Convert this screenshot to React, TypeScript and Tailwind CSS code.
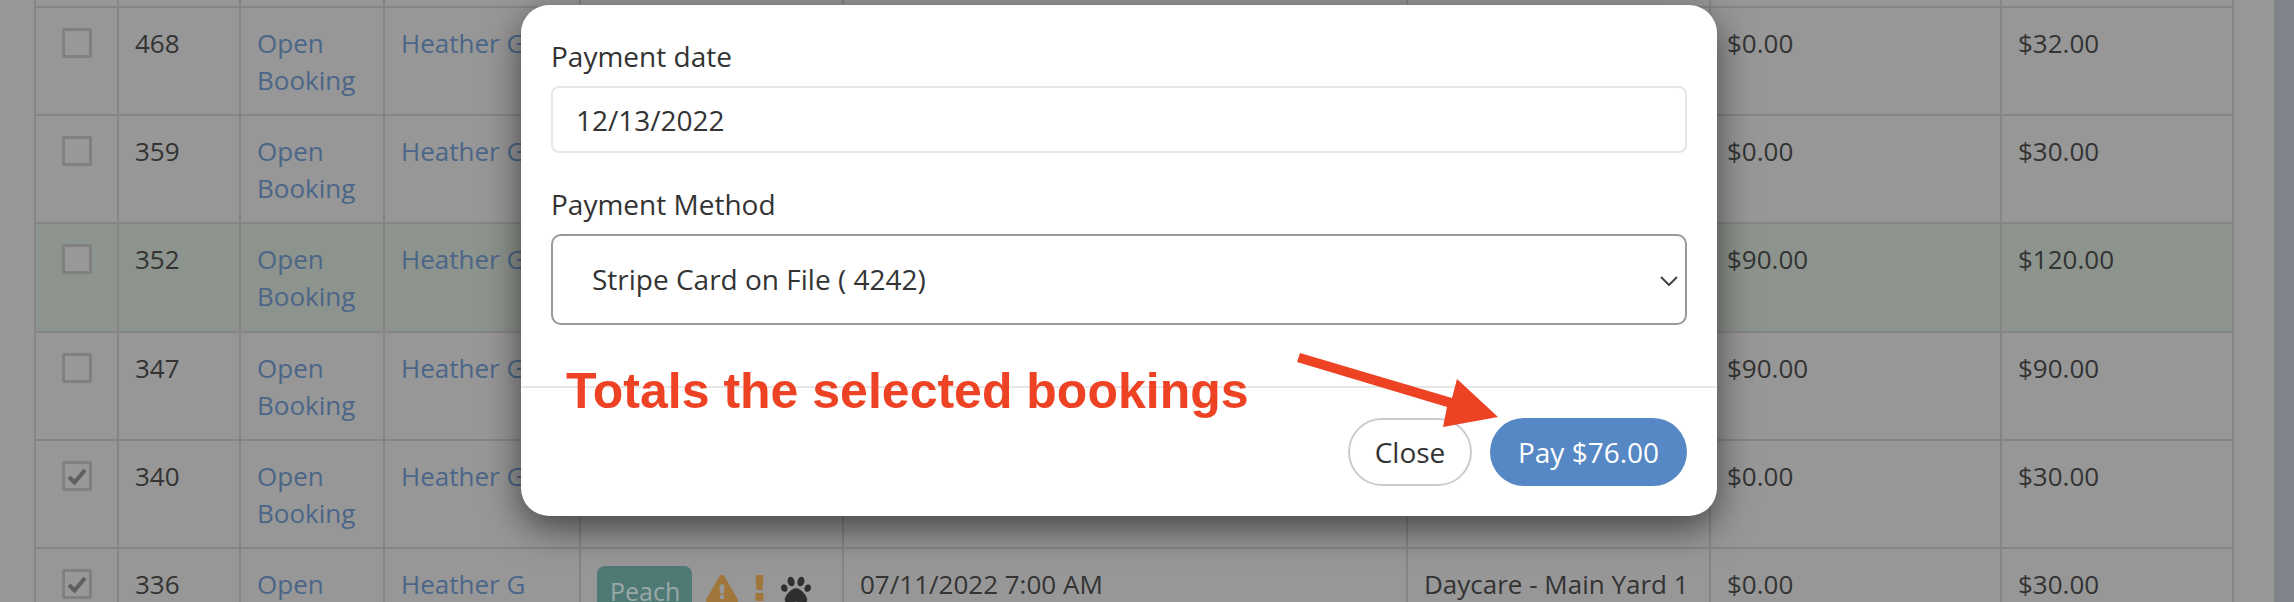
import React from "react";
import { FaExclamationTriangle, FaPaw } from "react-icons/fa";

const rows = [
  { id: "468", paid: "$0.00", total: "$32.00", checked: false, green: false, h: "h-[108px]" },
  { id: "359", paid: "$0.00", total: "$30.00", checked: false, green: false, h: "h-[108px]" },
  { id: "352", paid: "$90.00", total: "$120.00", checked: false, green: true, h: "h-[109px]" },
  { id: "347", paid: "$90.00", total: "$90.00", checked: false, green: false, h: "h-[108px]" },
  { id: "340", paid: "$0.00", total: "$30.00", checked: true, green: false, h: "h-[108px]" },
];

function Box({ checked }: { checked: boolean }) {
  return (
    <div className="mx-auto mt-[3px] flex h-[30px] w-[30px] items-center justify-center rounded-[2px] border-[3px] border-[#808080] bg-[#989898]">
      {checked && (
        <svg width="20" height="17" viewBox="0 0 20 17" fill="none">
          <path d="M2 9 L7.5 14.5 L18 2" stroke="#5f5f5f" strokeWidth="4" />
        </svg>
      )}
    </div>
  );
}

const cell = "border-2 border-[#858585] px-[16px] pt-[17px] pb-0 align-top text-left font-normal";

function Row({ id, paid, total, checked, green, h, last }: { id: string; paid: string; total: string; checked: boolean; green: boolean; h: string; last?: boolean }) {
  return (
    <tr className={`${h} ${green ? "bg-[#8d938d]" : "bg-[#979797]"}`}>
      <td className={cell}><Box checked={checked} /></td>
      <td className={cell}>{id}</td>
      <td className={`${cell} text-[#4b6688]`}>Open Booking</td>
      <td className={`${cell} whitespace-nowrap text-[#4b6688]`}>Heather G</td>
      <td className={`${cell} whitespace-nowrap`}>
        {last && (
          <div className="flex items-start">
            <span className="h-[60px] w-[95px] shrink-0 rounded-[8px] bg-[#4f7975] pl-[13px] pt-[7px] text-[25px] text-[#9aa9a6]">Peach</span>
            <FaExclamationTriangle className="ml-[14px] mt-[7px] shrink-0 text-[32px] text-[#a0763a]" />
            <svg className="ml-[17px] mt-[9px] shrink-0" width="9" height="30" viewBox="0 0 9 30" fill="#a0763a">
              <path d="M0.5 1 a1 1 0 0 1 1 -1 h6 a1 1 0 0 1 1 1 L7.5 15 h-6 Z" />
              <rect x="0.5" y="18" width="8" height="8" rx="1" />
            </svg>
            <FaPaw className="ml-[17px] mt-[9px] shrink-0 text-[30px] text-[#2f2f2f]" />
          </div>
        )}
      </td>
      <td className={`${cell} whitespace-nowrap`}>{last ? "07/11/2022 7:00 AM" : ""}</td>
      <td className={`${cell} whitespace-nowrap`}>{last ? "Daycare - Main Yard 1" : ""}</td>
      <td className={cell}>{paid}</td>
      <td className={cell}>{total}</td>
    </tr>
  );
}

export default function App() {
  return (
    <div className="relative flex h-[602px] w-[2294px] overflow-hidden bg-[#979797] font-['Open_Sans',sans-serif] text-[26px] leading-[37px] text-[#333333]">
      <div className="min-w-0 flex-1 pl-[34px] pr-[40px]">
        <table className="w-[2199px] table-fixed border-collapse">
          <colgroup>
            <col className="w-[83px]" />
            <col className="w-[122px]" />
            <col className="w-[144px]" />
            <col className="w-[196px]" />
            <col className="w-[263px]" />
            <col className="w-[564px]" />
            <col className="w-[303px]" />
            <col className="w-[291px]" />
            <col className="w-[232px]" />
          </colgroup>
          <tbody>
            <tr className="h-[7px] bg-[#979797]">
              {Array.from({ length: 9 }).map((_, i) => (
                <td key={i} className="border-x-2 border-b-2 border-[#858585] p-0" />
              ))}
            </tr>
            {rows.map((r) => (
              <Row key={r.id} {...r} />
            ))}
            <Row id="336" paid="$0.00" total="$30.00" checked green={false} h="h-[108px]" last />
          </tbody>
        </table>
      </div>
      <div className="w-[20px] shrink-0 bg-[#80848a]" />

      {/* modal */}
      <div className="absolute left-[521px] top-[5px] w-[1196px] rounded-[28px] bg-white text-[28px] shadow-[0_12px_36px_rgba(0,0,0,0.55)]">
        <div className="px-[30px] pt-[33px]">
          <div className="mb-[11px]">Payment date</div>
          <input
            readOnly
            value="12/13/2022"
            className="block h-[67px] w-full rounded-[8px] border-2 border-[#e6e6e6] px-[23px] text-[#333333] outline-none"
          />
          <div className="mb-[11px] mt-[33px]">Payment Method</div>
          <div className="flex h-[91px] items-center justify-between rounded-[10px] border-2 border-[#999999] pl-[39px] pr-[7px]">
            <span>Stripe Card on File ( 4242)</span>
            <svg className="mt-[2px]" width="18" height="10" viewBox="0 0 18 10" fill="none">
              <path d="M1 1 L9 9 L17 1" stroke="#444444" strokeWidth="2" />
            </svg>
          </div>
        </div>
        <div className="mt-[61px] flex justify-end gap-[18px] border-t-2 border-[#e6e6e6] px-[30px] pb-[30px] pt-[30px]">
          <button className="h-[68px] w-[124px] rounded-full border-2 border-[#cccccc] bg-white text-[#333333]">Close</button>
          <button className="h-[68px] w-[197px] rounded-full bg-[#5588c5] text-white">Pay $76.00</button>
        </div>
      </div>

      {/* annotation */}
      <div className="absolute left-[566px] top-[363px] whitespace-nowrap font-['Liberation_Sans',sans-serif] text-[50px] font-bold leading-[56px] text-[#ee4224]">
        Totals the selected bookings
      </div>
      <svg className="absolute left-0 top-0" width="2294" height="602" fill="none">
        <polygon points="1300,353 1297,362 1447,407 1443,427 1498,417 1457,379 1452,398" fill="#ee4224" />
      </svg>
    </div>
  );
}
